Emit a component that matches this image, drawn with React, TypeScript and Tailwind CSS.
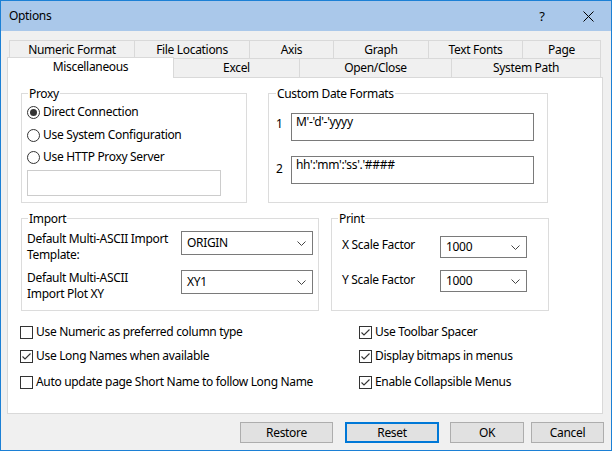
import React from "react";

function Radio({ checked, label, className = "" }: { checked?: boolean; label: string; className?: string }) {
  return (
    <div className={"flex items-center h-[22px] " + className}>
      <span className="w-[13px] h-[13px] rounded-full border border-[#333333] bg-white flex items-center justify-center shrink-0">
        {checked && <span className="w-[7px] h-[7px] rounded-full bg-[#333333]" />}
      </span>
      <span className="ml-[3px] whitespace-nowrap">{label}</span>
    </div>
  );
}

function Check({ checked, label }: { checked?: boolean; label: string }) {
  return (
    <div className="flex items-center h-[24px]">
      <span className="w-[13px] h-[13px] border border-[#333333] bg-white flex items-center justify-center shrink-0">
        {checked && (
          <svg width="11" height="11" viewBox="0 0 11 11">
            <path d="M1.5 5.5 L4 8 L9.5 2.5" fill="none" stroke="#333333" strokeWidth="1.1" />
          </svg>
        )}
      </span>
      <span className="ml-[3px] whitespace-nowrap">{label}</span>
    </div>
  );
}

function Chevron() {
  return (
    <svg width="9" height="5" viewBox="0 0 9 5" className="shrink-0">
      <path d="M0.5 0.5 L4.5 4.5 L8.5 0.5" fill="none" stroke="#444444" strokeWidth="1" />
    </svg>
  );
}

function Group({ title, className, legendLeft, children }: { title: string; className: string; legendLeft: string; children: React.ReactNode }) {
  return (
    <div className={"relative border border-[#dcdcdc] shrink-0 " + className}>
      <span className={"absolute -top-[8px] bg-white px-[1px] leading-[16px] whitespace-nowrap " + legendLeft}>{title}</span>
      {children}
    </div>
  );
}

export default function App() {
  return (
    <div className="w-[612px] h-[451px] bg-[#f0f0f0] border border-[#1c80d5] flex flex-col text-[12px] leading-[16px] text-black font-['Noto_Sans','DejaVu_Sans',sans-serif] tracking-[-0.32px] overflow-hidden">
      {/* Title bar */}
      <div className="h-[30px] bg-[#aac8ea] flex items-center shrink-0">
        <span className="pl-[8px] flex-1">Options</span>
        <div className="w-[46px] h-[30px] flex items-center justify-center text-[13px]">?</div>
        <div className="w-[46px] h-[30px] flex items-center justify-center">
          <svg width="11" height="11" viewBox="0 0 11 11">
            <path d="M0.5 0.5 L10.5 10.5 M10.5 0.5 L0.5 10.5" stroke="#000" strokeWidth="1" />
          </svg>
        </div>
      </div>

      {/* Tabs row 1 */}
      <div className="mt-[9px] ml-[8px] flex h-[18px] shrink-0">
        {[
          ["Numeric Format", "w-[125px]"],
          ["File Locations", "w-[115px]"],
          ["Axis", "w-[84px]"],
          ["Graph", "w-[95px]"],
          ["Text Fonts", "w-[94px]"],
        ].map(([t, w]) => (
          <div key={t} className={"h-[18px] border-t border-l border-[#d9d9d9] flex items-center justify-center " + w}>
            {t}
          </div>
        ))}
        <div className="w-[79px] h-[18px] border-t border-l border-r border-[#d9d9d9] flex items-center justify-center">Page</div>
      </div>

      {/* Tabs row 2 */}
      <div className="ml-[6px] flex items-end h-[19px] shrink-0">
        <div className="w-[167px] h-[21px] -mb-[1px] relative z-10 bg-white border-l border-t border-r border-[#d9d9d9] flex justify-center pt-[1px]">
          Miscellaneous
        </div>
        <div className="w-[126px] h-[19px] border-t border-r border-[#d9d9d9] flex items-center justify-center">Excel</div>
        <div className="w-[152px] h-[19px] border-t border-r border-[#d9d9d9] flex items-center justify-center">Open/Close</div>
        <div className="w-[149px] h-[19px] border-t border-r border-[#d9d9d9] flex items-center justify-center">System Path</div>
      </div>

      {/* Panel */}
      <div className="ml-[6px] w-[596px] h-[337px] bg-white border border-[#d9d9d9] flex flex-col shrink-0">
        {/* Row A */}
        <div className="mt-[15px] pl-[13px] flex gap-[21px]">
          <Group title="Proxy" className="w-[226px] h-[110px]" legendLeft="left-[6px]">
            <div className="pl-[5px] pt-[7px] flex flex-col">
              <Radio checked label="Direct Connection" />
              <Radio label="Use System Configuration" className="mt-[1px]" />
              <Radio label="Use HTTP Proxy Server" />
              <div className="mt-[2px] w-[194px] h-[26px] border border-[#cccccc] bg-white" />
            </div>
          </Group>
          <Group title="Custom Date Formats" className="w-[280px] h-[110px]" legendLeft="left-[7px]">
            <div className="pt-[19px] pl-[7px] flex flex-col">
              <div className="flex items-start">
                <span className="w-[15px] pt-[3px]">1</span>
                <div className="w-[243px] h-[28px] border border-[#7a7a7a] bg-white px-[4px]">M'-'d'-'yyyy</div>
              </div>
              <div className="flex items-start mt-[15px]">
                <span className="w-[15px] pt-[5px]">2</span>
                <div className="w-[243px] h-[28px] border border-[#7a7a7a] bg-white px-[4px]">hh':'mm':'ss'.'####</div>
              </div>
            </div>
          </Group>
        </div>

        {/* Row B */}
        <div className="mt-[15px] pl-[13px] flex gap-[12px]">
          <Group title="Import" className="w-[298px] h-[93px]" legendLeft="left-[6px]">
            <div className="pt-[12px] pl-[5px] flex flex-col">
              <div className="flex items-start">
                <span className="w-[154px]">
                  Default Multi-ASCII Import
                  <br />
                  Template:
                </span>
                <div className="w-[132px] h-[24px] border border-[#7a7a7a] bg-white flex items-center justify-between pl-[5px] pr-[6px]">
                  <span>ORIGIN</span>
                  <Chevron />
                </div>
              </div>
              <div className="flex items-start mt-[7px]">
                <span className="w-[154px]">
                  Default Multi-ASCII
                  <br />
                  Import Plot XY
                </span>
                <div className="w-[132px] h-[24px] border border-[#7a7a7a] bg-white flex items-center justify-between pl-[5px] pr-[6px]">
                  <span>XY1</span>
                  <Chevron />
                </div>
              </div>
            </div>
          </Group>
          <Group title="Print" className="w-[218px] h-[93px]" legendLeft="left-[6px]">
            <div className="pt-[17px] pl-[10px] flex flex-col">
              <div className="flex items-center">
                <span className="w-[98px] mb-[4px]">X Scale Factor</span>
                <div className="w-[87px] h-[22px] border border-[#7a7a7a] bg-white flex items-center justify-between pl-[5px] pr-[6px]">
                  <span>1000</span>
                  <Chevron />
                </div>
              </div>
              <div className="flex items-center mt-[12px]">
                <span className="w-[98px] mb-[2px]">Y Scale Factor</span>
                <div className="w-[87px] h-[22px] border border-[#7a7a7a] bg-white flex items-center justify-between pl-[5px] pr-[6px]">
                  <span>1000</span>
                  <Chevron />
                </div>
              </div>
            </div>
          </Group>
        </div>

        {/* Row C */}
        <div className="mt-[9px] pl-[12px] grid grid-cols-[339px_1fr]">
          <Check label="Use Numeric as preferred column type" />
          <Check checked label="Use Toolbar Spacer" />
          <Check checked label="Use Long Names when available" />
          <Check checked label="Display bitmaps in menus" />
          <div className="mt-[2px]">
            <Check label="Auto update page Short Name to follow Long Name" />
          </div>
          <div className="mt-[2px]">
            <Check checked label="Enable Collapsible Menus" />
          </div>
        </div>
      </div>

      {/* Buttons */}
      <div className="mt-[8px] flex justify-end pr-[7px] shrink-0">
        <button className="w-[93px] h-[21px] bg-[#e1e1e1] border border-[#adadad] leading-[16px]">Restore</button>
        <button className="ml-[12px] w-[94px] h-[21px] bg-[#e1e1e1] border-2 border-[#0078d7] leading-[16px]">Reset</button>
        <button className="ml-[11px] w-[74px] h-[21px] bg-[#e1e1e1] border border-[#adadad] leading-[16px]">OK</button>
        <button className="ml-[7px] w-[73px] h-[21px] bg-[#e1e1e1] border border-[#adadad] leading-[16px]">Cancel</button>
      </div>
    </div>
  );
}
